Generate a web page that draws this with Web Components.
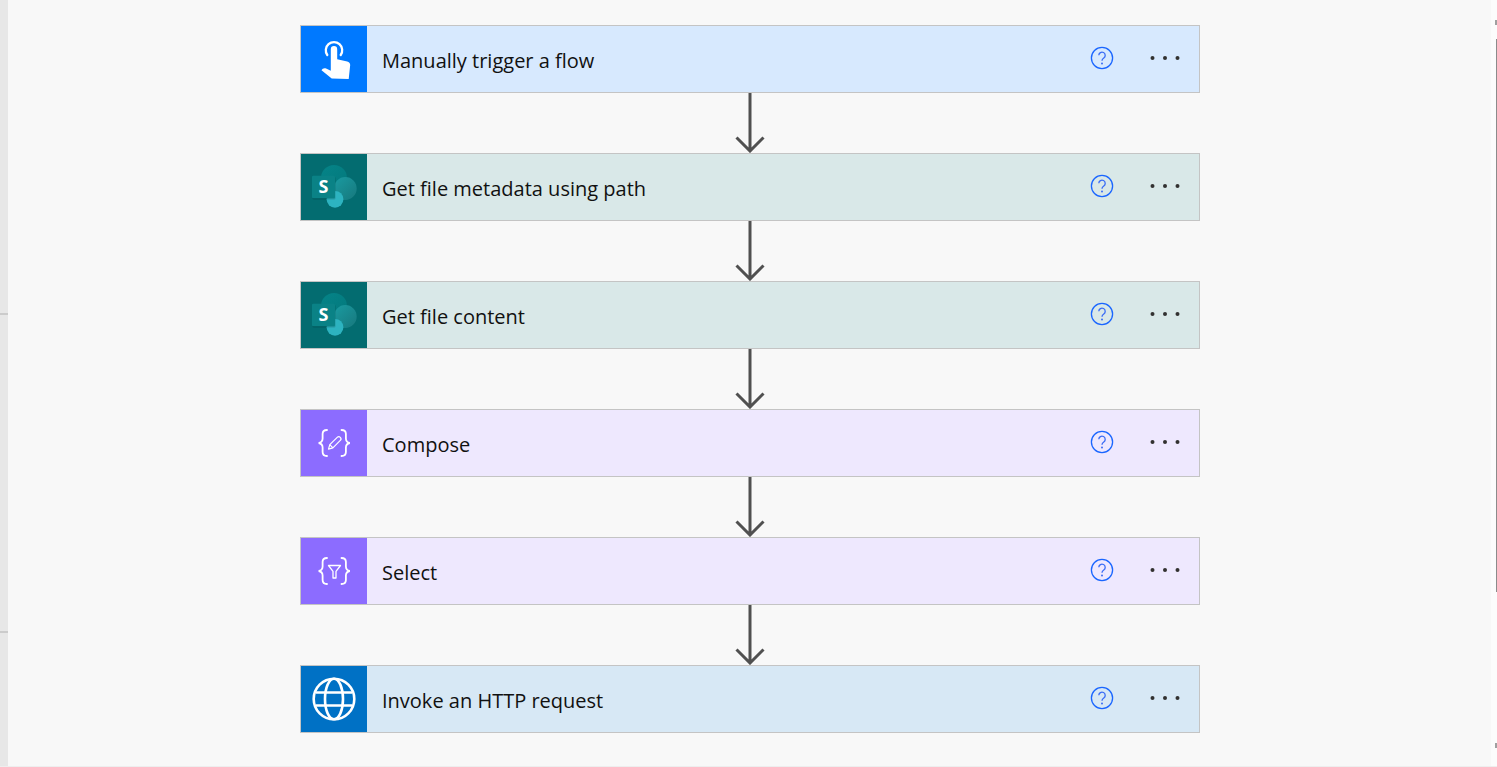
<!DOCTYPE html>
<html lang="en">
<head>
<meta charset="utf-8">
<title>Flow</title>
<style>
html, body { margin: 0; height: 100%; overflow: hidden; background: #f8f8f8; }
body { font-family: 'Open Sans', 'Noto Sans', sans-serif; }
</style>
</head>
<body>
<flow-canvas>
  <flow-step title="Manually trigger a flow" icon="touch" tone="#d7e9fe" brand="#0079ff"></flow-step>
  <flow-arrow></flow-arrow>
  <flow-step title="Get file metadata using path" icon="sharepoint" tone="#d9e8e8" brand="#036c70"></flow-step>
  <flow-arrow></flow-arrow>
  <flow-step title="Get file content" icon="sharepoint" tone="#d9e8e8" brand="#036c70"></flow-step>
  <flow-arrow></flow-arrow>
  <flow-step title="Compose" icon="compose" tone="#eee8fe" brand="#8c6cff"></flow-step>
  <flow-arrow></flow-arrow>
  <flow-step title="Select" icon="select" tone="#eee8fe" brand="#8c6cff"></flow-step>
  <flow-arrow></flow-arrow>
  <flow-step title="Invoke an HTTP request" icon="globe" tone="#d7e8f5" brand="#0071c5"></flow-step>
</flow-canvas>
<script>
// Icons sit on a 66x66 tile, so coordinates read as pixels from the tile corner.
const BRACES = `
  <g fill="none" stroke="#fff" stroke-width="1.800" stroke-linecap="round">
    <path d="M26 20c-3.400 0-4.400 1.500-4.400 4v4.500c0 2.600-1 3.900-3.900 4.500 2.900.6 3.900 1.900 3.900 4.500V42c0 2.500 1 4 4.400 4"/>
    <path d="M40.500 20c3.400 0 4.400 1.500 4.400 4v4.500c0 2.600 1 3.900 3.900 4.500-2.900.6-3.900 1.900-3.900 4.500V42c0 2.500-1 4-4.400 4"/>
  </g>`;

const STEP_ICONS = {
  touch: `
    <path d="M26.300 29a8.200 8.200 0 1 1 13.400 0" fill="none" stroke="#fff" stroke-width="2.300" stroke-linecap="round"/>
    <path d="M29.800 23.200a3.200 3.200 0 0 1 6.400 0v10l10 2.300c1.800.5 3 1.700 3 3.500l-1.500 14-17-.5-10.200-8.200c.8-1.800 2.800-2.500 4.600-1.700l4.700 2.100z" fill="#fff"/>`,
  sharepoint: `
    <defs>
      <linearGradient id="spA" x1="0" y1="0" x2="1" y2="1"><stop offset="0" stop-color="#058488"/><stop offset="1" stop-color="#03787c"/></linearGradient>
      <linearGradient id="spB" x1="0" y1="0" x2="1" y2="1"><stop offset="0" stop-color="#1a9ba1"/><stop offset="1" stop-color="#17787d"/></linearGradient>
    </defs>
    <circle cx="33" cy="24" r="13" fill="url(#spA)"/>
    <circle cx="44.300" cy="34.500" r="11.400" fill="url(#spB)"/>
    <circle cx="34" cy="45.300" r="8.400" fill="#2db3c0"/>
    <rect x="11.500" y="22.500" width="23" height="23" rx="1.500" fill="#000" opacity=".16"/>
    <rect x="11" y="21.700" width="23" height="22.600" rx="1.200" fill="#0a8286"/>
    <text x="22.500" y="39.300" text-anchor="middle" font-family="'Open Sans', sans-serif" font-weight="700" font-size="18" fill="#fff">S</text>`,
  compose: BRACES + `
    <g fill="none" stroke="#fff" stroke-width="1.200" stroke-linejoin="round">
      <path d="M27.500 39.200l1.300-4.500 7.400-7.400a2 2 0 0 1 3.100 3.100l-7.400 7.500z"/>
      <path d="M28.800 34.700l3.100 3.200"/>
    </g>`,
  select: BRACES + `
    <path d="M27.500 27.500h12l-4.500 5.800v6.700h-3v-6.700z" fill="none" stroke="#fff" stroke-width="1.300" stroke-linejoin="round"/>`,
  globe: `
    <g fill="none" stroke="#fff" stroke-width="2.600">
      <circle cx="33" cy="33" r="20.300"/>
      <ellipse cx="33" cy="33" rx="9" ry="20.300"/>
      <path d="M15 26.500h36M15 39.500h36"/>
    </g>`
};

const STEP_TEMPLATE = document.createElement('template');
STEP_TEMPLATE.innerHTML = `
<style>
:host {
  display: flex;
  align-items: stretch;
  box-sizing: border-box;
  width: 900px;
  height: 68px;
  border: 1px solid #c4c4c4;
  background: var(--tone);
  flex: none;
}
.tile { width: 66px; flex: none; background: var(--brand); }
.tile svg { display: block; width: 66px; height: 66px; }
.title {
  flex: 1;
  margin-left: 15px;
  padding-top: 4px;
  align-self: center;
  font-family: 'Open Sans', 'Noto Sans', sans-serif;
  font-size: 20px;
  line-height: 28px;
  color: #111;
  white-space: nowrap;
}
.actions {
  display: flex;
  align-items: center;
  gap: 35px;
  padding: 0 18px 2px 0;
}
.help { display: block; width: 24px; height: 24px; }
.more { display: block; width: 32px; height: 6px; }
</style>
<div class="tile"></div>
<div class="title"></div>
<div class="actions">
  <svg class="help" viewBox="0 0 24 24">
    <circle cx="12" cy="12" r="10.600" fill="none" stroke="#1a66ff" stroke-width="1.300"/>
    <path d="M8.800 9.300a3.200 3.200 0 1 1 5 2.700c-1.200.8-1.800 1.400-1.800 2.800" fill="none" stroke="#3a6cf5" stroke-width="1.300"/>
    <circle cx="12" cy="17.500" r="1" fill="#3a6cf5"/>
  </svg>
  <svg class="more" viewBox="0 0 32 6">
    <circle cx="3.500" cy="3" r="2" fill="#323130"/>
    <circle cx="16" cy="3" r="2" fill="#323130"/>
    <circle cx="28.500" cy="3" r="2" fill="#323130"/>
  </svg>
</div>
`;

class FlowStep extends HTMLElement {
  connectedCallback() {
    if (this.shadowRoot) return;
    this.attachShadow({ mode: 'open' });
    this.shadowRoot.appendChild(STEP_TEMPLATE.content.cloneNode(true));
    this.style.setProperty('--tone', this.getAttribute('tone'));
    this.style.setProperty('--brand', this.getAttribute('brand'));
    this.shadowRoot.querySelector('.title').textContent = this.getAttribute('title');
    this.shadowRoot.querySelector('.tile').innerHTML =
      `<svg viewBox="0 0 66 66">${STEP_ICONS[this.getAttribute('icon')]}</svg>`;
  }
}

class FlowArrow extends HTMLElement {
  connectedCallback() {
    if (this.shadowRoot) return;
    this.attachShadow({ mode: 'open' }).innerHTML = `
      <style>
      :host { display: block; width: 32px; height: 60px; flex: none; }
      svg { display: block; width: 32px; height: 60px; }
      </style>
      <svg viewBox="0 0 32 60">
        <path d="M16 0v57M2.500 44.500l13.500 13.500L29.500 44.500" fill="none" stroke="#505050" stroke-width="3"/>
      </svg>`;
  }
}

class FlowCanvas extends HTMLElement {
  constructor() {
    super();
    this.attachShadow({ mode: 'open' }).innerHTML = `
      <style>
      :host { display: flex; height: 767px; box-sizing: border-box; border-bottom: 1px solid #eee; background: #f8f8f8; overflow: hidden; }
      .rail {
        width: 8px;
        flex: none;
        display: flex;
        flex-direction: column;
        padding-top: 313px;
        gap: 316px;
        background: #e7e7e7;
      }
      .rail i { display: block; height: 2px; background: #cbcbcb; }
      .stage {
        flex: 1;
        display: flex;
        flex-direction: column;
        align-items: center;
        padding-top: 25px;
        padding-left: 1px;
      }
      .gutter {
        width: 6px;
        flex: none;
        display: flex;
        flex-direction: column;
        align-items: flex-end;
        padding-top: 20px;
        background: #fcfcfc;
      }
      .nub { width: 2px; height: 5px; background: #a0a0a0; flex: none; }
      .thumb { width: 1px; height: 553px; margin: 14px 0 151px; background: #8c8c8c; flex: none; }
      </style>
      <div class="rail"><i></i><i></i></div>
      <div class="stage"><slot></slot></div>
      <div class="gutter"><div class="nub"></div><div class="thumb"></div><div class="nub"></div></div>`;
  }
}

customElements.define('flow-step', FlowStep);
customElements.define('flow-arrow', FlowArrow);
customElements.define('flow-canvas', FlowCanvas);
</script>
</body>
</html>
